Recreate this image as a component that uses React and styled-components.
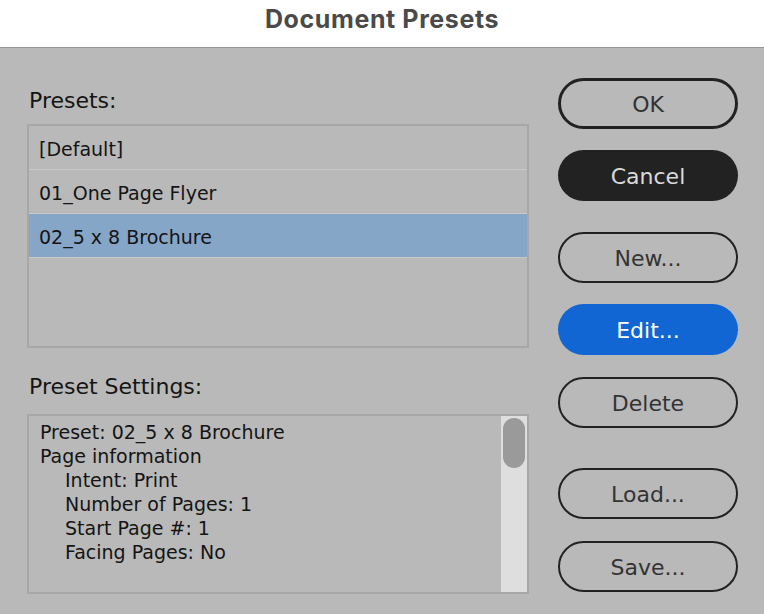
import React from 'react';
import styled, { createGlobalStyle } from 'styled-components';

const GlobalStyle = createGlobalStyle`
  html, body {
    margin: 0;
    padding: 0;
    background: #b9b9b9;
  }
  * {
    box-sizing: border-box;
  }
`;

const presets = ['[Default]', '01_One Page Flyer', '02_5 x 8 Brochure'];

const settings = [
  { text: 'Preset: 02_5 x 8 Brochure', indent: false },
  { text: 'Page information', indent: false },
  { text: 'Intent: Print', indent: true },
  { text: 'Number of Pages: 1', indent: true },
  { text: 'Start Page #: 1', indent: true },
  { text: 'Facing Pages: No', indent: true },
];

const App = () => {
  return (
    <Dialog>
      <GlobalStyle />
      <TitleBar>
        <Title>Document Presets</Title>
      </TitleBar>
      <Body>
        <LeftColumn>
          <Label>Presets:</Label>
          <PresetList>
            {presets.map((name, i) => (
              <PresetRow key={name} selected={i === 2}>{name}</PresetRow>
            ))}
          </PresetList>
          <Label $top={26}>Preset Settings:</Label>
          <SettingsBox>
            <SettingsText>
              {settings.map((line) => (
                <SettingsLine key={line.text} indent={line.indent}>{line.text}</SettingsLine>
              ))}
            </SettingsText>
            <ScrollTrack>
              <ScrollThumb />
            </ScrollTrack>
          </SettingsBox>
        </LeftColumn>
        <RightColumn>
          <Button variant="default">OK</Button>
          <Button variant="dark" $top={21}>Cancel</Button>
          <Button $top={31}>New...</Button>
          <Button variant="blue" $top={21}>Edit...</Button>
          <Button $top={22}>Delete</Button>
          <Button $top={40}>Load...</Button>
          <Button $top={22}>Save...</Button>
        </RightColumn>
      </Body>
    </Dialog>
  );
};

const Dialog = styled.div`
  width: 764px;
  height: 614px;
  background: #b9b9b9;
  font-family: "DejaVu Sans", "Liberation Sans", sans-serif;
  color: #141414;
  overflow: hidden;
`;

const TitleBar = styled.div`
  height: 48px;
  background: #ffffff;
  border-bottom: 1px solid #959595;
  display: flex;
  justify-content: center;
  padding-top: 5px;
`;

const Title = styled.div`
  font-family: Inter, "Liberation Sans", sans-serif;
  font-weight: 700;
  font-size: 25px;
  line-height: 28px;
  letter-spacing: 0.6px;
  color: #4a4a4a;
`;

const Body = styled.div`
  display: flex;
  padding-left: 27px;
`;

const LeftColumn = styled.div`
  width: 502px;
  display: flex;
  flex-direction: column;
  padding-top: 40px;
`;

const Label = styled.div`
  font-size: 22px;
  line-height: 26px;
  margin-top: ${(p) => p.$top || 0}px;
  margin-bottom: 10px;
  padding-left: 2px;
`;

const PresetList = styled.div`
  height: 224px;
  border: 2px solid #a7a7a7;
  display: flex;
  flex-direction: column;
`;

const PresetRow = styled.div`
  height: 44px;
  flex-shrink: 0;
  display: flex;
  align-items: center;
  padding: 3px 0 0 10px;
  font-size: 19px;
  border-bottom: 1px solid #c9c9c9;
  background: ${(p) => (p.selected ? '#86a6c8' : 'transparent')};
`;

const SettingsBox = styled.div`
  height: 180px;
  margin-top: 4px;
  border: 2px solid #a7a7a7;
  display: flex;
`;

const SettingsText = styled.div`
  flex: 1;
  padding: 4px 0 0 11px;
  font-size: 19px;
  line-height: 24px;
`;

const SettingsLine = styled.div`
  padding-left: ${(p) => (p.indent ? 25 : 0)}px;
  white-space: nowrap;
`;

const ScrollTrack = styled.div`
  width: 26px;
  background: #dedede;
  padding: 2px 2px 0 2px;
`;

const ScrollThumb = styled.div`
  width: 22px;
  height: 50px;
  border-radius: 11px;
  background: #9a9a9a;
`;

const RightColumn = styled.div`
  width: 180px;
  margin-left: 29px;
  padding-top: 30px;
  display: flex;
  flex-direction: column;
`;

const buttonColors = {
  default: { bg: 'transparent', fg: '#333333', border: '3px solid #222222' },
  dark: { bg: '#222222', fg: '#dadada', border: 'none' },
  blue: { bg: '#1166d4', fg: '#ffffff', border: 'none' },
  plain: { bg: 'transparent', fg: '#333333', border: '2px solid #222222' },
};

const Button = styled.button`
  height: 51px;
  width: 180px;
  margin-top: ${(p) => p.$top || 0}px;
  border-radius: 26px;
  font-family: "DejaVu Sans", "Liberation Sans", sans-serif;
  font-size: 22px;
  padding: 2px 0 0 0;
  background: ${(p) => buttonColors[p.variant || 'plain'].bg};
  color: ${(p) => buttonColors[p.variant || 'plain'].fg};
  border: ${(p) => buttonColors[p.variant || 'plain'].border};
`;

export default App;
